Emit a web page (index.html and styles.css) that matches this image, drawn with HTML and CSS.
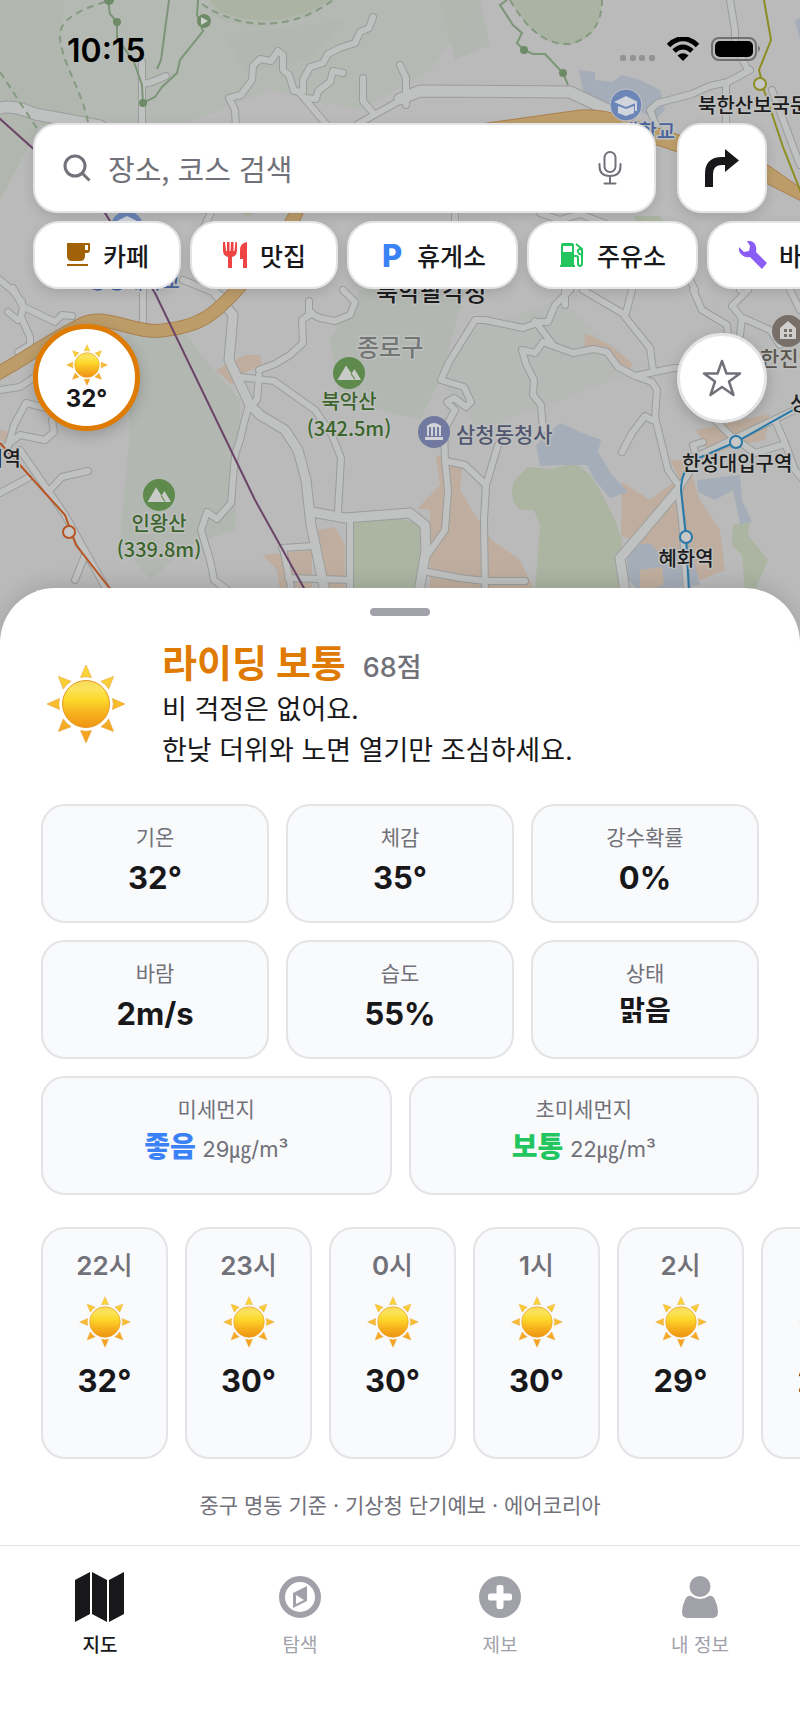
FILE: index.html
```
<!DOCTYPE html>
<html lang="ko">
<head>
<meta charset="utf-8">
<meta name="viewport" content="width=device-width, initial-scale=1">
<title>라이딩 지도</title>
<link rel="stylesheet" href="styles.css">
</head>
<body>
<svg class="defs" aria-hidden="true">
  <defs>
    <linearGradient id="disc" x1="0" y1="0" x2="0" y2="1">
      <stop offset="0" stop-color="#f8d95a"/><stop offset=".18" stop-color="#fbe35c"/><stop offset=".4" stop-color="#fdd92c"/><stop offset=".75" stop-color="#f6ab1b"/><stop offset="1" stop-color="#ef9413"/>
    </linearGradient>
    <linearGradient id="rayTop" x1="0" y1="0" x2="0" y2="80" gradientUnits="userSpaceOnUse">
      <stop offset="0" stop-color="#fbdc3c"/><stop offset="1" stop-color="#f39c1d"/>
    </linearGradient>
    <symbol id="sun" viewBox="0 0 80 80">
      <path fill="url(#rayTop)" stroke="#e9a23a" stroke-width=".6" d="M40 1l5.500 12.500q-5.500-1.500-11 0zM40 79l5.500-12.500q-5.500 1.500-11 0zM1 40l12.500-5.500q-1.500 5.500 0 11zM79 40l-12.500-5.500q1.500 5.500 0 11zM12.400 12.400l12.700 4.900q-4.900 2.900-7.800 7.800zM67.600 12.400l-12.700 4.900q4.900 2.900 7.800 7.800zM12.400 67.600l12.700-4.900q-4.900-2.900-7.800-7.800zM67.600 67.600l-12.700-4.900q4.900-2.900 7.800-7.800z"/>
      <circle cx="40" cy="40" r="23.500" fill="url(#disc)" stroke="#e99a22" stroke-width="1"/>
    </symbol>
    <symbol id="peak" viewBox="0 0 32 32">
      <circle cx="16" cy="16" r="16" fill="#5f8a4d"/>
      <path fill="#c9cbc8" d="M4.500 23L13 8.500l5.500 8 3-4.500L28 23z"/>
      <path fill="none" stroke="#5f8a4d" stroke-width="1.200" d="M18 16.500l4 6"/>
    </symbol>
    <g id="roads">
      <path d="M-5 110C8 104 20 108 35 114L100 126"/>
      <path d="M400 99L420 91L570 92L625 118"/>
    </g>
    <g id="streets">
      <path d="M142 62V130M143 84L152 82L166 76M236 130L235 110L229 98L241 95L252 80L253 66L260 59L271 61L278 51L283 55V70L289 75L294 91L303 92V80L310 67L323 63L328 54L340 48L355 43L360 32L369 28L373 17"/>
      <path d="M299 92L331 130M305 98L316 99L318 91L330 82L333 71L343 73M363 78V101L374 114M358 124L410 95M400 65L406 78V105"/>
      <path d="M730 0L735 30V45L748 70M750 70L728 82L710 86L692 94L658 103L650 110L657 128M726 86V130M772 90L800 165"/>
      <path d="M455 208V225M540 213L560 220L580 214L606 224M205 225L212 210M0 280L12 290L22 302M183 280L225 297"/>
      <path d="M13 288L23 307L21 317L30 337V345L18 352M8 312L18 320M24 307L55 322L62 315L72 316M143 290V333M0 390L20 387L50 367M8 447L14 425L26 403L46 408L58 415L52 420L54 432L45 440L20 435L5 447"/>
      <path d="M20 450L65 515L108 592M0 493L28 478M48 492L62 477L88 471M85 555L75 580M343 290L355 302L350 315L335 321L320 318L309 313V301M312 313L302 320L303 343L290 355L275 364L259 370M240 377L274 381L315 410L332 435L341 458L338 512M259 375L257 400L248 408L244 423L240 440L235 455L231 503L217 519L207 512L201 530L210 560L214 580L230 592"/>
      <path d="M425 525M282 548L313 546M283 548L292 592M288 578L350 580M350 520V592M428 572L460 578L485 581H525M485 592L484 520L486 485L465 465L446 461"/>
      <path d="M428 554L445 530L448 490L445 460L444 430L455 410L447 402L454 398L466 407L471 402L464 387L441 380L449 362L475 320L485 320L523 328L540 322L548 322L555 305L570 290M535 321L553 345M487 482L498 445M522 350L526 364L534 380L533 395L541 405L543 430M522 350L535 353L543 342L573 353L594 349L607 352L618 367L635 376L674 368H695M583 290L622 313L650 348L653 370M632 290L626 313M635 376L652 382L657 390L655 417L668 470L680 487M652 420L645 416L632 433L622 452M693 290L702 310L727 325L728 335M748 290L732 306L742 318L740 335M743 318L770 330L780 345M715 420L730 435L755 453L782 445M775 420L785 443L795 470L805 482M790 290L800 310"/>
      <path d="M805 405L700 455M695 452L693 445L703 442M678 490L682 520L687 592M678 490L700 455M565 290V305M740 290L748 275M695 290L690 280"/>
    </g>
    <g id="boulevards">
      <path d="M205 280L233 315L229 360L236 375L250 405L260 415L285 430L298 450L306 480L311 525L325 592M312 512L345 518L410 513L425 525L426 550L419 592M678 490L640 535L620 558L625 592"/>
    </g>
  </defs>
</svg>

<div class="app">
  <section class="map">
    <svg class="map-canvas" viewBox="0 0 800 650" preserveAspectRatio="xMidYMin slice" aria-label="지도">
      <rect width="800" height="650" fill="#b9bab9"/>
      <g fill="#b1b7af">
        <path d="M0 0H480L430 70L360 110L270 90L180 125H0z" opacity=".5"/>
        <path d="M0 0H65L60 40L90 125H40L0 200z"/>
        <path d="M210 0H335C300 28 240 34 210 14z"/><path d="M225 35L345 20L310 60L245 72z" opacity=".6"/>
        <path d="M440 0H480L490 45L455 60z" opacity=".8"/>
        <path d="M125 320L185 335L240 400L235 530L190 545L150 580L120 540L130 430z" opacity=".8"/>
        <path d="M400 290H465L440 380L420 420L340 400L330 340L360 290z" opacity=".8"/>
        <path d="M470 330L560 300L640 370L560 400L480 430L440 380z" opacity=".35"/>
      </g>
      <path fill="#abb4a3" d="M510 0H602C602 38 575 48 558 44C530 36 520 15 510 0zM210 0H330Q280 33 220 12z"/>
      <g fill="#acb5a2">
        <path d="M514 482L527 467L552 469L575 463L590 475L600 490L615 520L622 540V592H535L540 525L534 510L520 510Q508 500 514 482z"/>
        <path d="M353 520L400 518L420 525V592H353zM733 525L750 522L748 535L768 560L755 590H745L742 555L732 545z"/>
        <path d="M634 216H660L663 222H636zM243 213L252 211V215L245 216z"/>
      </g>
      <g fill="#bfae9f">
        <path d="M436 455L463 460L460 490L475 515L492 540L520 560L535 592H430V510L418 508L440 485zM622 482L650 500L690 470L700 500L720 530L725 570L700 580L680 560L650 550L621 535z"/>
        <path d="M585 333L610 345L632 363L630 375L615 370L604 376L620 365L605 352L584 352zM216 370L245 355L260 355L262 365L240 375L232 385zM696 430L770 414L765 440L740 445L710 455zM318 530L335 527L345 545V592H320zM262 555L312 550V592H280L277 570zM670 460H688L680 480zM0 430L9 432L7 443L0 440z"/>
      </g>
      <g fill="#a5adb8">
        <path d="M536 445L560 423L580 432L601 440L598 452L612 475L628 492L610 498L595 480L587 465L565 465L540 466z"/>
        <path d="M579 70L595 72V80L612 82L622 75L640 80L660 90L665 110L655 120L630 105L600 110L585 100zM697 480L740 475L742 500L752 522L740 524L733 490L715 500L698 492zM627 547L650 543L660 555L690 545L700 585L640 592L628 580zM795 20L800 18V40z"/>
      </g>
      <path fill="#c0af9f" d="M640 570L662 567L664 585L640 592z"/>
      <use href="#streets" class="road street-edge"/>
      <use href="#boulevards" class="road boulevard-edge"/>
      <use href="#roads" class="road avenue-edge"/>
      <use href="#streets" class="road street-fill"/>
      <use href="#boulevards" class="road boulevard-fill"/>
      <use href="#roads" class="road avenue-fill"/>
      <path d="M480 124L580 110Q600 109 615 114L765 163L805 191V203L760 180L660 146L600 128z" fill="#bc9d6a" stroke="#aa8150"/>
      <path d="M-5 375C20 362 50 340 75 328C100 310 125 330 155 331C200 328 215 315 242 284Q280 250 300 205" class="road orange-edge"/>
      <path d="M-5 375C20 362 50 340 75 328C100 310 125 330 155 331C200 328 215 315 242 284Q280 250 300 205" class="road orange-fill"/>
      <g fill="none" stroke="#849b80" stroke-width="2" stroke-dasharray="7 5">
        <path d="M105 2Q60 15 60 35C60 60 82 90 88 122M0 72L38 130M202 4C240 30 290 32 333 0M510 0C530 35 550 45 570 44Q602 35 602 0"/>
      </g>
      <g fill="none" stroke="#7b9577" stroke-width="2">
        <path d="M108 0L110 14L117 22V38L134 62L142 85L143 103L155 97L162 87L177 73L180 60L203 31L197 15L198 0M169 0L165 30L161 60L157 69M507 0L500 5L513 25L522 33L517 43L524 50L533 54H545L563 73L568 85"/>
      </g>
      <g fill="#6d8b67"><circle cx="109" r="5"/><circle cx="117" cy="22" r="4"/><circle cx="143" cy="103" r="4"/><circle cx="204" cy="21" r="7"/><circle cx="524" cy="50" r="4"/><circle cx="563" cy="73" r="4"/></g>
      <path d="M201 17v8l7-4z" fill="#d0d2cf"/>
      <path d="M-2 117L105 213L155 293L255 500L305 590" class="line" stroke="#6b4468"/>
      <path d="M0 443L65 515L76 545L115 595" class="line" stroke="#b85422"/>
      <circle cx="69" cy="532" r="6" fill="#c6c7c6" stroke="#b85422" stroke-width="2"/>
      <path d="M764 0L771 40L759 70L764 90L783 147L802 195" class="line" stroke="#8e8d23"/>
      <circle cx="760" cy="84" r="6" fill="#c6c7c6" stroke="#8e8d23" stroke-width="2"/>
      <path d="M802 405L736 442L696 459Q681 470 681 490L686 537L689 592" class="line" stroke="#2878a8"/>
      <g fill="#c6c7c6" stroke="#2878a8" stroke-width="2"><circle cx="736" cy="442" r="6"/><circle cx="686" cy="537" r="6"/></g>

      <circle cx="626" cy="105" r="16" fill="#6c86b8" stroke="#c4c7cb" stroke-width="1"/>
      <path fill="#d0d5dd" d="M614 102l12-6 12 6-12 5zM618 106l8 3 8-3v7l-8 3-8-3zM635 103h2v8h-2z"/>
      <circle cx="127" cy="227" r="16" fill="#6c86b8"/><path fill="#d0d5dd" d="M115 222l12-6 12 6-12 5z"/>
      <use href="#peak" x="333" y="357" width="32" height="32"/>
      <use href="#peak" x="143" y="479" width="32" height="32"/>
      <circle cx="434" cy="432" r="16" fill="#7279a0"/>
      <path fill="#d2d3d6" d="M425 437h18v3h-18zM427 427h2v9h-2zM431 427h2v9h-2zM435 427h2v9h-2zM439 427h2v9h-2zM426 427q8-8 16 0z"/>
      <circle cx="788" cy="331" r="16" fill="#786f69"/>
      <path fill="#cfcfcd" d="M780 328l8-7 8 7v11h-16z"/><path fill="#786f69" d="M784 329h3v3h-3zM789 329h3v3h-3zM784 334h3v3h-3zM789 334h3v3h-3z"/>
      <g class="labels">
        <text x="698" y="113">북한산보국문역</text>
        <text x="620" y="139" fill="#4a629c">대학교</text>
        <text x="88" y="289" fill="#4a629c">상명대학교</text>
        <text x="376" y="301" class="label-lg">북악팔각정</text>
        <text x="357" y="356" class="label-lg" fill="#747676">종로구</text>
        <text x="349" y="409" class="mid" fill="#3c652d">북악산</text>
        <text x="349" y="436" class="mid" fill="#3c652d">(342.5m)</text>
        <text x="159" y="531" class="mid" fill="#3c652d">인왕산</text>
        <text x="159" y="557" class="mid" fill="#3c652d">(339.8m)</text>
        <text x="456" y="442" class="label-md" fill="#525771">삼청동청사</text>
        <text x="760" y="366" class="label-md" fill="#5c5651">한진아파트</text>
        <text x="790" y="411">성신여대</text>
        <text x="682" y="471">한성대입구역</text>
        <text x="686" y="566" class="mid">혜화역</text>
        <text x="21" y="466" class="end">홍제역</text>
      </g>
    </svg>

    <div class="status">
      <time>10:15</time>
      <svg class="status-icons" viewBox="0 0 142 28" aria-hidden="true">
        <g fill="#929392"><rect y="18" width="6" height="6" rx="2"/><rect x="10" y="18" width="6" height="6" rx="2"/><rect x="19" y="18" width="6" height="6" rx="2"/><rect x="29" y="18" width="6" height="6" rx="2"/></g>
        <g fill="none" stroke="#000" stroke-width="5"><path d="M48.500 8.500Q63 -5 77.500 8.500"/><path d="M54 14Q63 6 72 14"/></g>
        <path d="M57.500 18.500Q63 14 68.500 18.500L63 24z"/>
        <rect x="92" y="1" width="44" height="22" rx="7" fill="none" stroke="#707170" stroke-width="2"/>
        <rect x="95" y="4" width="38" height="16" rx="5"/>
        <path d="M138 8.500q4 3 0 6.500z" fill="#707170"/>
      </svg>
    </div>

    <form class="search-row">
      <div class="search">
        <svg class="search-icon" viewBox="0 0 28 28" fill="none" stroke="#71717a" stroke-width="3" aria-hidden="true"><circle cx="12" cy="12" r="10"/><path d="M19 19l7.500 7.500"/></svg>
        <input type="search" placeholder="장소, 코스 검색" aria-label="장소, 코스 검색">
        <button type="button" class="mic" aria-label="음성 검색">
          <svg viewBox="0 0 24 34" fill="none" stroke="#71717a" stroke-width="2" stroke-linecap="round"><rect x="6.500" y="1" width="11" height="20" rx="5.500"/><path d="M1.500 13v2q0 10 10.500 10t10.500-10v-2M12 25v7M6.500 32.500h11"/></svg>
        </button>
      </div>
      <button type="button" class="route" aria-label="길찾기">
        <svg viewBox="0 0 36 38" fill="#18181b"><path d="M1 38V25Q1 8 18 8h3V0l14 11.500L21 23v-7h-3Q9 16 9 25v13z"/></svg>
      </button>
    </form>

    <div class="chips">
      <button type="button" class="chip"><svg viewBox="0 0 26 26" fill="#a16207"><path fill-rule="evenodd" d="M2 1h22q1 0 1 1v6q0 3-3 3h-2v3q0 5-5 5H7q-5 0-5-5zM20 3v5h3V3z"/><path d="M2 22h21v2H2z"/></svg>카페</button>
      <button type="button" class="chip"><svg viewBox="0 0 26 26" fill="#ef4444"><path d="M1 0h2l1 9h1V0h2.500v9h1L9 0h2.500v9h1l1-9H15v8q0 6-5 7v11H6V15Q1 14 1 8zM25 0v26h-4v-9h-3V8q0-7 7-8z"/></svg>맛집</button>
      <button type="button" class="chip"><span class="parking" aria-hidden="true">P</span>휴게소</button>
      <button type="button" class="chip"><svg viewBox="0 0 26 26" fill="#22c55e"><path fill-rule="evenodd" d="M4 1h9q2 0 2 2v20h1v2H1v-2h1V3q0-2 2-2zM4 4v6h9V4z"/><path fill="none" stroke="#22c55e" stroke-width="2" d="M15 14h2q2 0 2 2v5q0 3 2 3t2-3V7l-6-5M22 7q-4 0-3 3t4 2"/></svg>주유소</button>
      <button type="button" class="chip"><svg class="wrench" viewBox="0 0 28 28" fill="#8b5cf6"><path d="M8 0q5-1 8 3 2 4 1 8l11 11-5 6-12-12q-5 1-8-2-4-3-3-8l5 5 5-1 1-5z"/></svg>바이크</button>
    </div>

    <div class="map-tools">
      <button type="button" class="weather-button" aria-label="날씨 32°"><svg viewBox="0 0 80 80"><use href="#sun"/></svg><span>32°</span></button>
      <button type="button" class="star-button" aria-label="즐겨찾기"><svg viewBox="0 0 40 38" fill="none" stroke="#71717a" stroke-width="2.500" stroke-linejoin="round"><path d="M20 2l4.500 12.500H38L27 22.500 31.500 36 20 28 8.500 36 13 22.500 2 14.500h13.500z"/></svg></button>
    </div>
  </section>

  <main class="sheet">
    <div class="handle"></div>
    <header class="summary">
      <svg viewBox="0 0 80 80" aria-hidden="true"><use href="#sun"/></svg>
      <div>
        <h1>라이딩 보통 <small>68점</small></h1>
        <p>비 걱정은 없어요.<br>한낮 더위와 노면 열기만 조심하세요.</p>
      </div>
    </header>
    <dl class="metrics">
      <div class="card"><dt>기온</dt><dd>32°</dd></div>
      <div class="card"><dt>체감</dt><dd>35°</dd></div>
      <div class="card"><dt>강수확률</dt><dd>0%</dd></div>
      <div class="card"><dt>바람</dt><dd>2m/s</dd></div>
      <div class="card"><dt>습도</dt><dd>55%</dd></div>
      <div class="card"><dt>상태</dt><dd class="word">맑음</dd></div>
      <div class="card wide"><dt>미세먼지</dt><dd class="word"><b class="good">좋음</b> <small>29㎍/m³</small></dd></div>
      <div class="card wide"><dt>초미세먼지</dt><dd class="word"><b class="fair">보통</b> <small>22㎍/m³</small></dd></div>
    </dl>
    <ol class="hours">
      <li class="card"><h2>22<span>시</span></h2><svg viewBox="0 0 80 80"><use href="#sun"/></svg><b>32°</b></li>
      <li class="card"><h2>23<span>시</span></h2><svg viewBox="0 0 80 80"><use href="#sun"/></svg><b>30°</b></li>
      <li class="card"><h2>0<span>시</span></h2><svg viewBox="0 0 80 80"><use href="#sun"/></svg><b>30°</b></li>
      <li class="card"><h2>1<span>시</span></h2><svg viewBox="0 0 80 80"><use href="#sun"/></svg><b>30°</b></li>
      <li class="card"><h2>2<span>시</span></h2><svg viewBox="0 0 80 80"><use href="#sun"/></svg><b>29°</b></li>
      <li class="card"><h2>3<span>시</span></h2><svg viewBox="0 0 80 80"><use href="#sun"/></svg><b>29°</b></li>
    </ol>
    <p class="source">중구 명동 기준 · 기상청 단기예보 · 에어코리아</p>
  </main>

  <nav class="tabs">
    <a href="#map" class="active" aria-current="page"><svg viewBox="0 0 52 52" fill="currentColor"><path d="M1 9L16 1v42L1 51zM18 1l15 8v42l-15-8zM35 9l15-8v42l-15 8z"/></svg>지도</a>
    <a href="#explore"><svg viewBox="0 0 52 52" fill="currentColor"><circle cx="26" cy="26" r="18" fill="none" stroke="currentColor" stroke-width="6"/><path fill-rule="evenodd" d="M19 22l14-7v15l-14 7zM22 24v9l8-4z"/></svg>탐색</a>
    <a href="#report"><svg viewBox="0 0 52 52"><circle cx="26" cy="26" r="21" fill="currentColor"/><path d="M24.500 14h3q2 0 2 2v6.500H36q2 0 2 2v3q0 2-2 2h-6.500V36q0 2-2 2h-3q-2 0-2-2v-6.500H16q-2 0-2-2v-3q0-2 2-2h6.500V16q0-2 2-2z" fill="#fff"/></svg>제보</a>
    <a href="#me"><svg viewBox="0 0 52 52" fill="currentColor"><circle cx="26" cy="15.500" r="10.500"/><path d="M17 25q9 6 18 0 4-1 6 4 3 6 3 12 0 6-6 6H14q-6 0-6-6 0-6 3-12 2-5 6-4z"/></svg>내 정보</a>
  </nav>
</div>
</body>
</html>
```
FILE: styles.css
```
* { box-sizing: border-box; }

body {
  margin: 0;
  background: #fff;
  color: #18181b;
  font-family: Inter, "Noto Sans CJK KR", sans-serif;
}

h1, h2, p, dl, dd, ol { margin: 0; padding: 0; }

button {
  padding: 0;
  border: 2px solid #e4e4e7;
  background: #fff;
  color: inherit;
  font: inherit;
}

svg { display: block; flex: none; }
.defs { position: absolute; width: 0; height: 0; }
.app { overflow: hidden; }

/* Map */
.map {
  position: relative;
  padding: 32px 33px 217px;
  overflow: hidden;
  background: #b9bab9;
}
.map-canvas { position: absolute; top: 0; left: 0; width: 100%; height: 100%; }
.road { fill: none; stroke-linejoin: round; stroke-linecap: round; }
.street-edge { stroke: #9b9d9c; stroke-width: 8px; }
.street-fill { stroke: #c0c1c1; stroke-width: 6px; }
.boulevard-edge { stroke: #9b9d9c; stroke-width: 11px; }
.boulevard-fill { stroke: #c0c1c1; stroke-width: 9px; }
.avenue-edge { stroke: #9b9d9c; stroke-width: 13px; }
.avenue-fill { stroke: #c0c1c1; stroke-width: 11px; }
.orange-edge { stroke: #aa8150; stroke-width: 14px; }
.orange-fill { stroke: #bc9d6a; stroke-width: 12px; }
.line { fill: none; stroke-width: 2px; }
.labels {
  fill: #1c1c1e;
  font-family: "Noto Sans CJK KR", sans-serif;
  font-size: 20px;
  font-weight: 500;
  paint-order: stroke;
  stroke: #bec0be;
  stroke-width: 3px;
  stroke-linejoin: round;
}
.labels .mid { text-anchor: middle; }
.labels .end { text-anchor: end; }
.labels .label-md { font-size: 21px; }
.labels .label-lg { font-size: 24px; }

.status {
  position: relative;
  display: flex;
  justify-content: space-between;
  align-items: center;
  padding: 0 5px 0 34px;
}
.status time { font-size: 32px; font-weight: 600; line-height: 38px; color: #000; }
.status-icons { width: 142px; height: 28px; }

.search-row {
  position: relative;
  display: flex;
  gap: 21px;
  margin-top: 53px;
}
.search {
  display: flex;
  flex: 1;
  align-items: center;
  min-width: 0;
  height: 90px;
  padding: 0 32px 0 28px;
  border: 2px solid #e4e4e7;
  border-radius: 24px;
  background: #fff;
  box-shadow: 0 4px 12px rgb(0 0 0 / 12%);
}
.search-icon { width: 28px; height: 28px; }
.search input {
  flex: 1;
  min-width: 0;
  margin-left: 17px;
  padding: 0;
  border: 0;
  outline: 0;
  background: none;
  color: inherit;
  font: 29px/42px "Noto Sans CJK KR", sans-serif;
}
.search input::placeholder { color: #71717a; opacity: 1; }
.mic { border: 0; }
.mic svg { width: 24px; height: 34px; }
.route {
  display: grid;
  place-items: center;
  width: 90px;
  height: 90px;
  border-radius: 24px;
  box-shadow: 0 4px 12px rgb(0 0 0 / 12%);
}
.route svg { width: 36px; height: 38px; }

.chips {
  position: relative;
  display: flex;
  gap: 9px;
  margin: 8px -33px 0 0;
}
.chip {
  display: flex;
  flex: none;
  align-items: center;
  gap: 12px;
  height: 68px;
  padding: 0 30px;
  border-radius: 26px;
  box-shadow: 0 4px 12px rgb(0 0 0 / 12%);
  font-size: 25px;
  font-weight: 500;
}
.chip svg { width: 26px; height: 26px; }
.chip .wrench { width: 28px; height: 28px; }
.parking { width: 26px; color: #3b82f6; font-size: 31px; font-weight: 800; text-align: center; }

.map-tools {
  position: relative;
  display: flex;
  justify-content: space-between;
  align-items: center;
  margin-top: 35px;
}
.weather-button {
  display: flex;
  flex-direction: column;
  align-items: center;
  justify-content: center;
  width: 107px;
  height: 107px;
  border: 5px solid #df7b03;
  border-radius: 50%;
  box-shadow: 0 4px 14px rgb(0 0 0 / 20%);
  font-size: 24px;
  font-weight: 700;
  line-height: 26px;
}
.weather-button svg { width: 42px; height: 42px; }
.star-button {
  display: grid;
  place-items: center;
  width: 90px;
  height: 90px;
  border-width: 3px;
  border-radius: 50%;
  box-shadow: 0 4px 14px rgb(0 0 0 / 20%);
}
.star-button svg { width: 40px; height: 38px; }

/* Weather sheet */
.sheet {
  position: relative;
  margin-top: -60px;
  padding: 20px 41px 24px;
  border-radius: 55px 55px 0 0;
  background: #fff;
  box-shadow: 0 -4px 20px rgb(0 0 0 / 12%);
}
.handle { width: 60px; height: 8px; margin: 0 auto; border-radius: 4px; background: #a1a1aa; }

.summary { display: flex; align-items: center; gap: 36px; margin-top: 21px; padding-left: 5px; }
.summary svg { width: 80px; height: 80px; }
.summary h1 { color: #df7b03; font-size: 38px; font-weight: 700; line-height: 52px; }
.summary small {
  margin-left: 8px;
  color: #71717a;
  font-size: 27px;
  font-weight: 500;
  line-height: 36px;
}
.summary p { font-size: 27px; line-height: 41px; }

.card {
  border: 2px solid #e4e4e7;
  border-radius: 24px;
  background: #f9fafb;
  text-align: center;
}
.metrics {
  display: grid;
  grid-template-columns: repeat(6, 1fr);
  gap: 17px;
  margin-top: 33px;
}
.metrics .card { grid-column: span 2; height: 119px; padding-top: 17px; }
.metrics .wide { grid-column: span 3; }
.metrics dt { color: #71717a; font-size: 21px; line-height: 30px; }
.metrics dd { margin-top: 4px; font-size: 31px; font-weight: 700; line-height: 42px; }
.metrics .word { font-size: 28px; line-height: 36px; }
.good { color: #3b82f6; }
.fair { color: #22c55e; }
.metrics small { color: #71717a; font-size: 22px; font-weight: 400; line-height: 30px; }

.hours { display: flex; gap: 17px; margin: 32px -41px 0 0; overflow: hidden; list-style: none; }
.hours .card {
  display: flex;
  flex: none;
  flex-direction: column;
  align-items: center;
  width: 127px;
  height: 232px;
  padding-top: 19px;
}
.hours h2 { color: #71717a; font-size: 26px; font-weight: 600; line-height: 36px; }
.hours h2 span { font-weight: 500; }
.hours svg { width: 52px; height: 52px; margin: 12px 0; }
.hours b { font-size: 31px; line-height: 42px; }

.source { margin-top: 32px; color: #71717a; font-size: 21px; line-height: 30px; text-align: center; }

/* Tab bar */
.tabs {
  position: relative;
  display: grid;
  grid-template-columns: repeat(4, 1fr);
  padding: 25px 0 71px;
  border-top: 1px solid #e4e4e7;
  background: #fff;
}
.tabs a {
  display: flex;
  flex-direction: column;
  align-items: center;
  gap: 10px;
  color: #a1a1aa;
  font-size: 19px;
  line-height: 26px;
  text-decoration: none;
}
.tabs .active { color: #18181b; font-weight: 500; }
.tabs svg { width: 52px; height: 52px; }
```
